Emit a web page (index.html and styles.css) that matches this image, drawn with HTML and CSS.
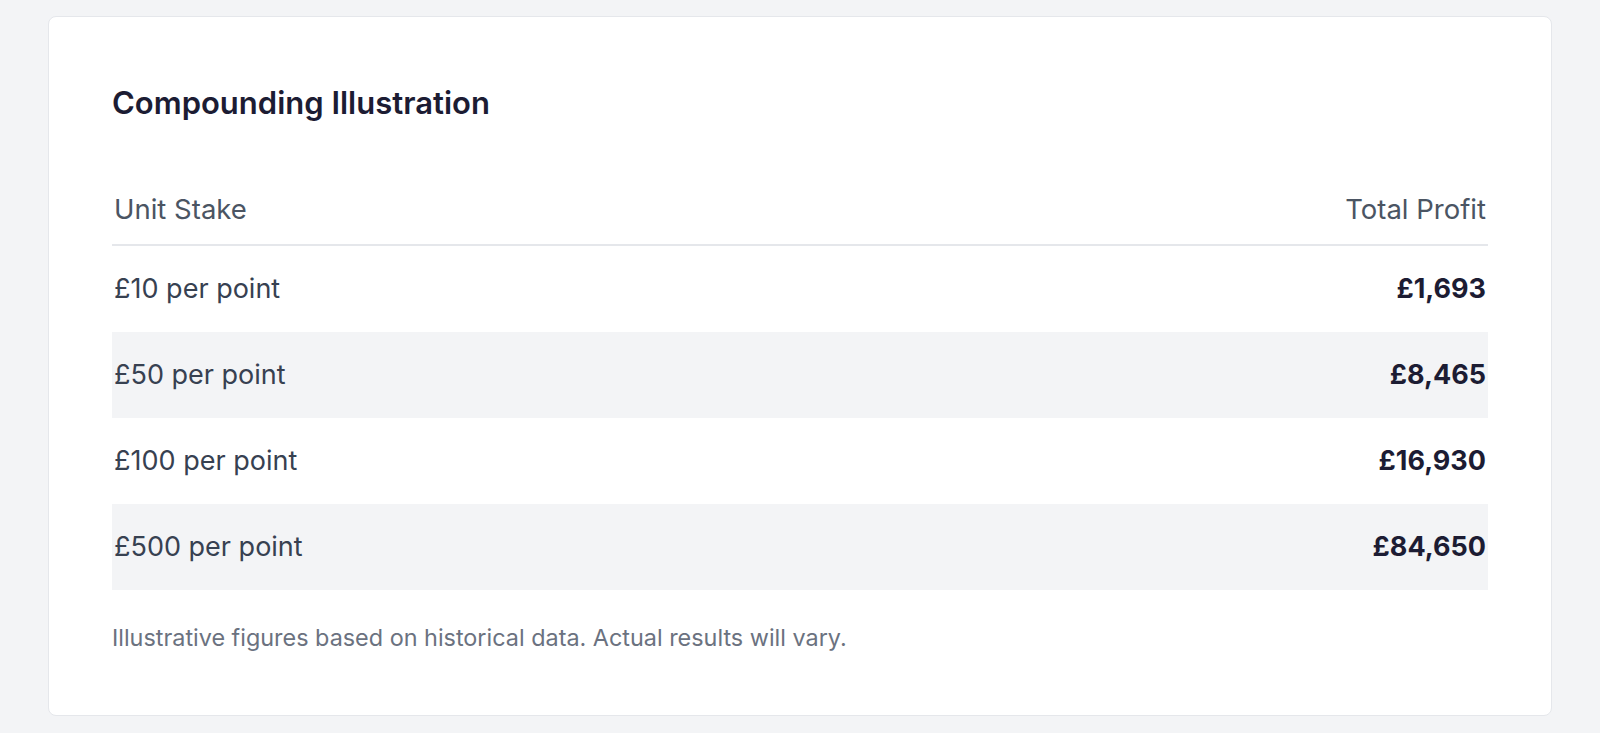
FILE: index.html
```html
<!DOCTYPE html>
<html lang="en">
<head>
    <meta charset="UTF-8">
    <meta name="viewport" content="width=device-width, initial-scale=1.0">
    <title>Compounding Illustration</title>
    <link rel="stylesheet" href="styles.css">
</head>
<body>
    <div class="page">
        <section class="card">
            <h2 class="card-title">Compounding Illustration</h2>

            <table class="stake-table">
                <thead>
                    <tr>
                        <th>Unit Stake</th>
                        <th class="num">Total Profit</th>
                    </tr>
                </thead>
                <tbody>
                    <tr>
                        <td>£10 per point</td>
                        <td class="num profit">£1,693</td>
                    </tr>
                    <tr>
                        <td>£50 per point</td>
                        <td class="num profit">£8,465</td>
                    </tr>
                    <tr>
                        <td>£100 per point</td>
                        <td class="num profit">£16,930</td>
                    </tr>
                    <tr>
                        <td>£500 per point</td>
                        <td class="num profit">£84,650</td>
                    </tr>
                </tbody>
            </table>

            <p class="note">Illustrative figures based on historical data. Actual results will vary.</p>
        </section>
    </div>
</body>
</html>
```

FILE: styles.css
```css
html, body {
    margin: 0;
    padding: 0;
    background-color: #f3f4f6;
    font-family: Inter, "Noto Sans", Arial, sans-serif;
}

.page {
    padding: 16px 48px 18px 48px;
}

.card {
    background-color: #ffffff;
    border: 1px solid #e5e7eb;
    border-radius: 8px;
    padding: 68px 63px 61px 63px;
}

.card-title {
    margin: 0 0 70px 0;
    font-size: 31px;
    line-height: 36px;
    font-weight: 600;
    color: #1c1c33;
}

.stake-table {
    width: 100%;
    border-collapse: collapse;
}

.stake-table th {
    padding: 0 2px 17px 2px;
    font-size: 27.5px;
    line-height: 36px;
    font-weight: 400;
    color: #4b5563;
    text-align: left;
    border-bottom: 2px solid #e5e7eb;
}

.stake-table td {
    padding: 25px 2px;
    font-size: 27px;
    line-height: 36px;
    color: #374151;
}

.stake-table tbody tr:nth-child(even) {
    background-color: #f3f4f6;
}

.stake-table .num {
    text-align: right;
}

.stake-table .profit {
    font-weight: 700;
    color: #1c1c33;
}

.note {
    margin: 32px 0 0 0;
    font-size: 23.4px;
    line-height: 32px;
    color: #6b7280;
}
```
